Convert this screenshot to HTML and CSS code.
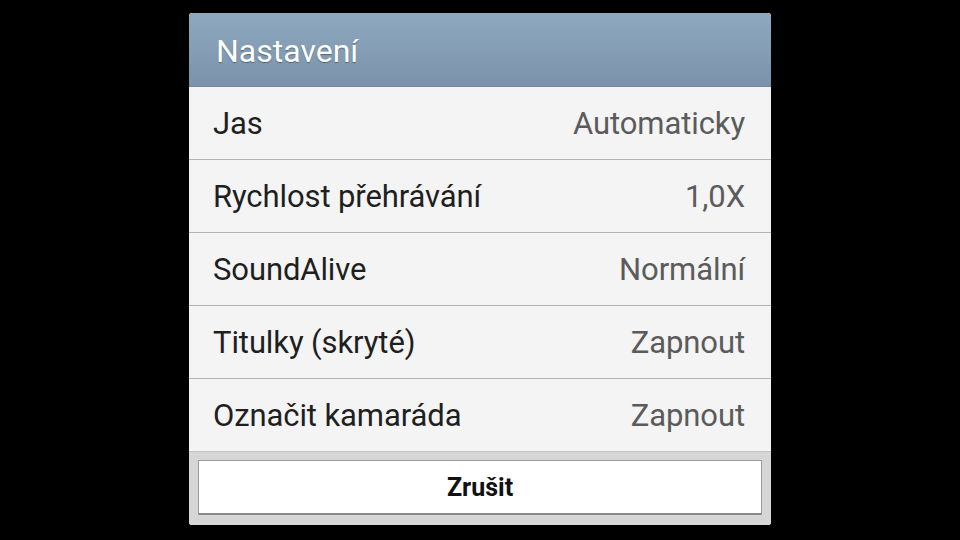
FILE: index.html
```html
<!DOCTYPE html>
<html lang="cs">
<head>
<meta charset="utf-8">
<title>Nastavení</title>
<link rel="stylesheet" href="styles.css">
</head>
<body>
<div class="screen">
  <div class="dialog">
    <div class="header"><span class="title">Nastavení</span></div>
    <ul class="list">
      <li class="row"><span class="label">Jas</span><span class="value">Automaticky</span></li>
      <li class="row"><span class="label">Rychlost přehrávání</span><span class="value">1,0X</span></li>
      <li class="row"><span class="label">SoundAlive</span><span class="value">Normální</span></li>
      <li class="row"><span class="label">Titulky (skryté)</span><span class="value">Zapnout</span></li>
      <li class="row last"><span class="label">Označit kamaráda</span><span class="value">Zapnout</span></li>
    </ul>
    <div class="footer"><button class="btn">Zrušit</button></div>
  </div>
</div>
</body>
</html>
```

FILE: styles.css
```css
html, body {
  margin: 0;
  padding: 0;
  background: #000;
}
.screen {
  width: 960px;
  height: 540px;
  display: flex;
  justify-content: center;
  align-items: flex-start;
  padding-top: 13px;
  box-sizing: border-box;
  font-family: Roboto, "Liberation Sans", sans-serif;
}
.dialog {
  width: 582px;
  border-radius: 3px;
  overflow: hidden;
  background: #f4f4f4;
}
.header {
  height: 74px;
  box-sizing: border-box;
  background: linear-gradient(#8ea8bf, #7a93aa);
  border-bottom: 1px solid #6f879c;
  display: flex;
  align-items: center;
  padding-left: 27px;
}
.title {
  color: #fff;
  font-size: 32px;
  text-shadow: 0 1px 1px rgba(0,0,0,0.35);
  padding-top: 2px;
}
.list {
  list-style: none;
  margin: 0;
  padding: 0;
}
.row {
  height: 73px;
  box-sizing: border-box;
  border-bottom: 1px solid #b2b2b2;
  display: flex;
  align-items: center;
  justify-content: space-between;
  padding: 1px 26px 0 24px;
  font-size: 31px;
  letter-spacing: -0.1px;
}
.row.last {
  border-bottom: 1px solid #c4c4c4;
}
.label {
  color: #1f1f1f;
}
.value {
  color: #5b5b5b;
}
.footer {
  background: #d6d6d6;
  height: 73px;
  box-sizing: border-box;
  padding: 8px 9px 10px 9px;
  display: flex;
}
.btn {
  flex: 1;
  background: #fff;
  border: 1px solid #9a9a9a;
  border-bottom: 2px solid #8a8a8a;
  border-radius: 1px;
  font-family: Roboto, "Liberation Sans", sans-serif;
  font-weight: bold;
  font-size: 25px;
  color: #111;
  padding: 0;
}
```
